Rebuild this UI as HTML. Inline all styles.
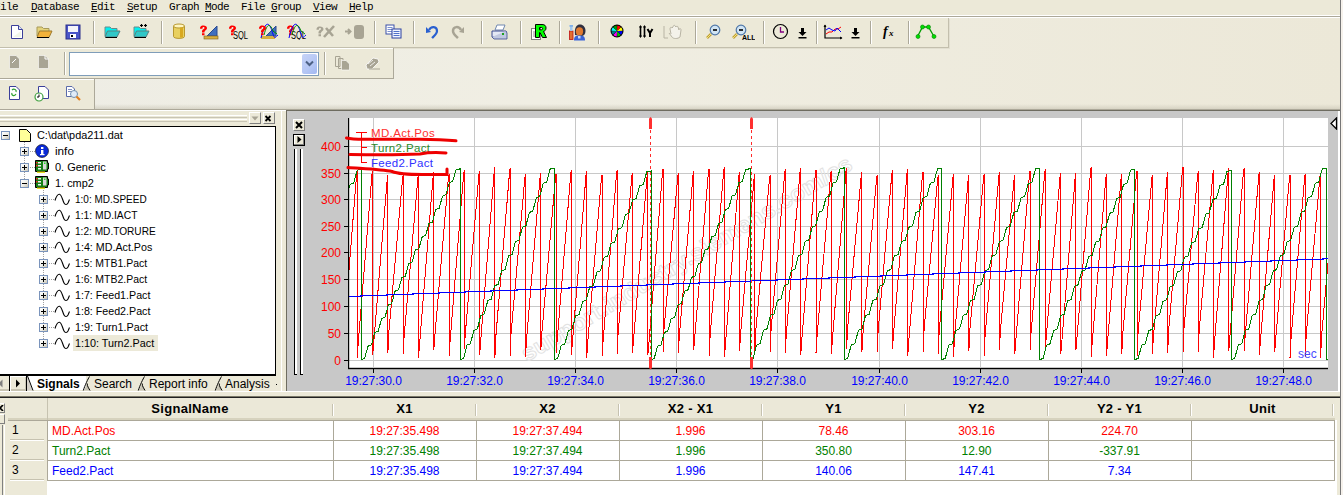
<!DOCTYPE html>
<html><head><meta charset="utf-8">
<style>
*{margin:0;padding:0;box-sizing:border-box}
html,body{width:1343px;height:495px;overflow:hidden;background:#ECE9D8;position:relative;font-family:"Liberation Sans",sans-serif}
.a{position:absolute}
.menu{font-family:"Liberation Mono",monospace;font-size:11px;letter-spacing:-0.6px;color:#000;top:0px;line-height:14px;white-space:pre}
.menu u{text-decoration:underline;text-underline-offset:1px;text-decoration-thickness:1px}
.sep{position:absolute;width:2px;height:22px;border-left:1px solid #ACA899;border-right:1px solid #fff}
.ico{position:absolute}
.tree{font-size:10.7px;color:#000;white-space:pre;line-height:12px}
.exp{position:absolute;width:9px;height:9px;border:1px solid #7A94BC;background:linear-gradient(135deg,#fff 0%,#f0f0ea 50%,#c8c4b4 100%)}
.exp:before{content:"";position:absolute;left:1px;top:3px;width:5px;height:1px;background:#000}
.exp.p:after{content:"";position:absolute;left:3px;top:1px;width:1px;height:5px;background:#000}
.dot{position:absolute;border-left:1px dotted #A0A0A0}
.doth{position:absolute;border-top:1px dotted #A0A0A0}
.hd{font-weight:bold;font-size:13px;letter-spacing:0.3px;text-align:center;position:absolute;top:401px;line-height:15px}
.cell{position:absolute;font-size:12px;line-height:14px;text-align:center}
</style></head><body>
<!-- menu bar -->
<div class="a" style="left:0;top:0;width:1343px;height:15px;background:#ECE9D8"></div>
<div class="a menu" style="left:-6px"><u>F</u>ile</div>
<div class="a menu" style="left:31px"><u>D</u>atabase</div>
<div class="a menu" style="left:91px"><u>E</u>dit</div>
<div class="a menu" style="left:127px"><u>S</u>etup</div>
<div class="a menu" style="left:169px">Graph <u>M</u>ode</div>
<div class="a menu" style="left:241px">File <u>G</u>roup</div>
<div class="a menu" style="left:313px"><u>V</u>iew</div>
<div class="a menu" style="left:349px"><u>H</u>elp</div>
<div class="a" style="left:0;top:15px;width:1343px;height:1px;background:#FFFFFF"></div>
<div class="a" style="left:0;top:16px;width:1343px;height:1px;background:#ACA899"></div>
<div class="a" style="left:0;top:17px;width:1343px;height:1px;background:#FFFFFF"></div>
<!-- dock gradient area -->
<div class="a" style="left:0;top:18px;width:1343px;height:92px;background:linear-gradient(90deg,#EEEDE5 0%,#F0EEE3 40%,#ECE8D8 100%)"></div>
<div class="a" style="left:0;top:104px;width:1343px;height:5px;background:linear-gradient(180deg,rgba(200,196,180,0) 0%,rgba(200,196,180,.6) 100%)"></div>
<div class="a" style="left:0;top:109px;width:1343px;height:1px;background:#ACA899"></div>
<!-- toolbars -->
<div class="a" style="left:0;top:18px;width:949px;height:30px;background:#ECE9D8;border-right:1px solid #C3BFAD;border-bottom:1px solid #C3BFAD;box-shadow:1px 1px 0 #E2DFD0"></div>
<div class="a" style="left:0;top:48px;width:394px;height:31px;background:#ECE9D8;border-right:1px solid #ACA899;border-bottom:1px solid #ACA899;box-shadow:inset 0 1px 0 #fff"></div>
<div class="a" style="left:0;top:79px;width:95px;height:31px;background:#ECE9D8;border-right:1px solid #ACA899;border-bottom:1px solid #ACA899;box-shadow:inset 0 1px 0 #fff"></div>
<svg class="ico" style="left:10px;top:24px" width="14" height="16" viewBox="0 0 14 16"><path d="M1.5,1.5 H8.5 L12.5,5.5 V14.5 H1.5 Z" fill="#fff" stroke="#3B3F9A" stroke-width="1"/><path d="M8.5,1.5 V5.5 H12.5" fill="#DCE6F5" stroke="#3B3F9A"/><path d="M3,13 L11,7 V13Z" fill="#E8F0D8" opacity=".6"/></svg>
<svg class="ico" style="left:36px;top:25px" width="17" height="14" viewBox="0 0 17 14"><path d="M1,2 H6 L7.5,3.5 H13 V11 H1Z" fill="#E4D37A" stroke="#A89A5A"/><path d="M3.5,6 H16 L13,12.5 H1Z" fill="#F2B23A" stroke="#9C7A30"/><path d="M1,12.5 H13" stroke="#000"/></svg>
<svg class="ico" style="left:65px;top:24px" width="16" height="16" viewBox="0 0 16 16"><rect x="1" y="1" width="14" height="14" fill="#4A55C8" stroke="#2A2F8A"/><rect x="3" y="2" width="10" height="6" fill="#F4F4FA"/><rect x="5" y="10" width="6" height="4" fill="#fff"/><rect x="6" y="11" width="2" height="2" fill="#000"/></svg>
<div class="sep" style="left:93px;top:21px;height:23px"></div>
<svg class="ico" style="left:104px;top:24px" width="17" height="15" viewBox="0 0 17 15"><path d="M1,3 H6 L7.5,4.5 H13 V12 H1Z" fill="#00F0F0" stroke="#6A8A8A"/><path d="M3.5,7 H16 L13,13 H1Z" fill="#30C8C8" stroke="#5A8080"/><path d="M1.5,13.5 H13" stroke="#000"/></svg>
<svg class="ico" style="left:133px;top:24px" width="17" height="15" viewBox="0 0 17 15"><path d="M1,3 H6 L7.5,4.5 H13 V12 H1Z" fill="#00F0F0" stroke="#6A8A8A"/><path d="M3.5,7 H16 L13,13 H1Z" fill="#30C8C8" stroke="#5A8080"/><path d="M1.5,13.5 H13" stroke="#000"/><path d="M7,1.5 h3 M8.5,0 v3 M11,1.5 h3 M12.5,0 v3" stroke="#000" stroke-width="1.2"/></svg>
<div class="sep" style="left:161px;top:21px;height:23px"></div>
<svg class="ico" style="left:172px;top:23px" width="14" height="17" viewBox="0 0 14 17"><path d="M1.5,3 V13.5 C1.5,16 12.5,16 12.5,13.5 V3" fill="#E8D060" stroke="#B89830"/><ellipse cx="7" cy="3" rx="5.5" ry="2" fill="#FFF6C0" stroke="#B89830"/><rect x="8" y="4.5" width="3" height="10" fill="#D8A820"/></svg>
<svg class="ico" style="left:199px;top:23px" width="20" height="17" viewBox="0 0 20 17"><path d="M8,13 L18,3 V13Z" fill="#3F6FC0" stroke="#2A4A90"/><rect x="5" y="13" width="14" height="3" fill="#D8B040" stroke="#806020" stroke-width=".6"/><path transform="translate(0,2.5) scale(1,0.82)" d="M1,4 C1,0.5 3,0 4.5,0 C6.5,0 8,1 8,3.5 C8,5.5 6,6 5.5,7.5 V8.5 H3 V7 C3,5 5.5,4.5 5.5,3.2 C5.5,2.2 5,1.8 4.5,1.8 C3.8,1.8 3.4,2.4 3.4,4Z M3,9.5 H5.5 V12 H3Z" fill="#FF0000"/></svg>
<svg class="ico" style="left:228px;top:23px" width="21" height="17" viewBox="0 0 21 17"><path transform="translate(0,2.5) scale(1,0.82)" d="M1,4 C1,0.5 3,0 4.5,0 C6.5,0 8,1 8,3.5 C8,5.5 6,6 5.5,7.5 V8.5 H3 V7 C3,5 5.5,4.5 5.5,3.2 C5.5,2.2 5,1.8 4.5,1.8 C3.8,1.8 3.4,2.4 3.4,4Z M3,9.5 H5.5 V12 H3Z" fill="#FF0000"/><text x="5" y="16" font-family="Liberation Sans" font-size="10" fill="#000" textLength="15" lengthAdjust="spacingAndGlyphs">SQL</text></svg>
<svg class="ico" style="left:258px;top:23px" width="21" height="17" viewBox="0 0 21 17"><path d="M8,13 L18,3 V13Z" fill="#3F6FC0" stroke="#2A4A90"/><rect x="3" y="13" width="14" height="3" fill="#D8B040"/><path d="M3,15 C7,-2 11,-2 14,8 S17,14 20,12" fill="none" stroke="#0000FF"/><path d="M6,12 C9,0 12,0 15,8 L19,11" fill="none" stroke="#008800"/><path transform="translate(0,2.5) scale(1,0.82)" d="M1,4 C1,0.5 3,0 4.5,0 C6.5,0 8,1 8,3.5 C8,5.5 6,6 5.5,7.5 V8.5 H3 V7 C3,5 5.5,4.5 5.5,3.2 C5.5,2.2 5,1.8 4.5,1.8 C3.8,1.8 3.4,2.4 3.4,4Z M3,9.5 H5.5 V12 H3Z" fill="#FF0000"/></svg>
<svg class="ico" style="left:286px;top:23px" width="21" height="17" viewBox="0 0 21 17"><path transform="translate(0,2.5) scale(1,0.82)" d="M1,4 C1,0.5 3,0 4.5,0 C6.5,0 8,1 8,3.5 C8,5.5 6,6 5.5,7.5 V8.5 H3 V7 C3,5 5.5,4.5 5.5,3.2 C5.5,2.2 5,1.8 4.5,1.8 C3.8,1.8 3.4,2.4 3.4,4Z M3,9.5 H5.5 V12 H3Z" fill="#FF0000"/><text x="5" y="16" font-family="Liberation Sans" font-size="10" fill="#000" textLength="15" lengthAdjust="spacingAndGlyphs">SQL</text><path d="M3,15 C7,-2 11,-2 14,8 S17,14 20,12" fill="none" stroke="#0000FF"/><path d="M6,12 C9,0 12,0 15,8 L19,11" fill="none" stroke="#008800"/></svg>
<svg class="ico" style="left:315px;top:24px" width="22" height="14" viewBox="0 0 22 14"><path transform="translate(0.5,2.5) scale(1,0.82)" d="M1,4 C1,0.5 3,0 4.5,0 C6.5,0 8,1 8,3.5 C8,5.5 6,6 5.5,7.5 V8.5 H3 V7 C3,5 5.5,4.5 5.5,3.2 C5.5,2.2 5,1.8 4.5,1.8 C3.8,1.8 3.4,2.4 3.4,4Z M3,9.5 H5.5 V12 H3Z" fill="#A8A494"/><path d="M9,13 L19,2 M11,4 L18,12" stroke="#A8A494" stroke-width="2.6"/></svg>
<svg class="ico" style="left:344px;top:24px" width="21" height="16" viewBox="0 0 21 16"><path d="M1,7.5 H6 M4,5 L6.5,7.5 L4,10" fill="none" stroke="#A8A494" stroke-width="2"/><rect x="10" y="1" width="10" height="14" rx="3" fill="#A8A494"/></svg>
<div class="sep" style="left:374px;top:21px;height:23px"></div>
<svg class="ico" style="left:385px;top:24px" width="17" height="15" viewBox="0 0 17 15"><rect x="1" y="1" width="8" height="9" fill="#fff" stroke="#3A50A8"/><path d="M2.5,3.5h5M2.5,5.5h5M2.5,7.5h5" stroke="#7A90D0"/><rect x="7" y="5" width="9" height="9" fill="#F0F4FF" stroke="#2A40A0"/><path d="M8.5,7.5h6M8.5,9.5h6M8.5,11.5h6" stroke="#5070C8"/></svg>
<div class="sep" style="left:413px;top:21px;height:23px"></div>
<svg class="ico" style="left:425px;top:24px" width="14" height="15" viewBox="0 0 14 15"><path d="M4,6 C6,2 12,2 12,7 C12,10 9,12 7,14" fill="none" stroke="#2A60D0" stroke-width="2.2"/><path d="M1,3 L1,9 L6,8Z" fill="#2A60D0"/></svg>
<svg class="ico" style="left:451px;top:24px" width="15" height="15" viewBox="0 0 15 15"><path d="M10,6 C8,2 2,2 2,7 C2,10 5,12 7,14" fill="none" stroke="#A8A494" stroke-width="2.5"/><path d="M13,3 L13,9 L8,8Z" fill="#A8A494"/></svg>
<div class="sep" style="left:481px;top:21px;height:23px"></div>
<svg class="ico" style="left:491px;top:24px" width="17" height="16" viewBox="0 0 17 16"><path d="M4,6 L6,1 H14 L12,6Z" fill="#fff" stroke="#7088B0"/><path d="M1,7 H15 V13 H1Z" fill="#E4E8F4" stroke="#3A4A90"/><path d="M1,13 L3,15 H16 V9 L15,7" fill="#C0C8E0" stroke="#3A4A90" stroke-width=".8"/><rect x="11" y="9" width="2" height="2" fill="#20A020"/></svg>
<div class="sep" style="left:520px;top:21px;height:23px"></div>
<svg class="ico" style="left:530px;top:23px" width="17" height="18" viewBox="0 0 17 18"><rect x="1.5" y="5.5" width="9" height="11" fill="#fff" stroke="#808080"/><path d="M3,9h5M3,11h5M3,13h5" stroke="#909090"/><path d="M5.5,1.5 H12 C15,1.5 16,3 16,5 C16,7 15,8 13.5,8.5 L16.5,14.5 H12.5 L10,9.5 H9.5 V14.5 H5.5Z M9.5,4.5 V6.8 H11.5 C12.3,6.8 12.6,6.2 12.6,5.6 C12.6,5 12.3,4.5 11.5,4.5Z" fill="#00FF00" stroke="#000" stroke-width="1"/></svg>
<div class="sep" style="left:559px;top:21px;height:23px"></div>
<svg class="ico" style="left:568px;top:23px" width="19" height="18" viewBox="0 0 19 18"><rect x="1.5" y="8" width="3.5" height="8.5" fill="#E07030" stroke="#C01010" stroke-width=".8"/><rect x="2" y="3" width="2.5" height="5" fill="#A0C8F0"/><rect x="1.5" y="2" width="3.5" height="1.8" fill="#80B0E8"/><path d="M7,12 C6,4 9,1.5 12,1.5 C15,1.5 17.5,4 17.5,8 C17.5,11 16,12.5 14,13Z" fill="#303040"/><ellipse cx="11.5" cy="8.5" rx="3.6" ry="4.2" fill="#E07A30"/><path d="M6,17.5 C6,13 8,12.5 11.5,12.5 C15,12.5 17,13 17,17.5Z" fill="#3A64D8"/><rect x="10" y="13" width="2.5" height="2.5" fill="#C8D8F0"/></svg>
<div class="sep" style="left:598px;top:21px;height:23px"></div>
<svg class="ico" style="left:610px;top:24px" width="14" height="14" viewBox="0 0 14 14"><circle cx="7" cy="7" r="6.5" fill="#000"/><path d="M7,7 L7.29,1.51 A5.5,5.5 0 0 1 10.68,2.91Z" fill="#FF0000"/><path d="M7,7 L11.09,3.32 A5.5,5.5 0 0 1 12.49,6.71Z" fill="#FFFF00"/><path d="M7,7 L12.49,7.29 A5.5,5.5 0 0 1 11.09,10.68Z" fill="#0000FF"/><path d="M7,7 L10.68,11.09 A5.5,5.5 0 0 1 7.29,12.49Z" fill="#00C000"/><path d="M7,7 L6.71,12.49 A5.5,5.5 0 0 1 3.32,11.09Z" fill="#FF00FF"/><path d="M7,7 L2.91,10.68 A5.5,5.5 0 0 1 1.51,7.29Z" fill="#008080"/><path d="M7,7 L1.51,6.71 A5.5,5.5 0 0 1 2.91,3.32Z" fill="#00FFFF"/><path d="M7,7 L3.32,2.91 A5.5,5.5 0 0 1 6.71,1.51Z" fill="#00A000"/></svg>
<svg class="ico" style="left:638px;top:24px" width="16" height="15" viewBox="0 0 16 15"><path d="M2.5,2 V13 M6.5,2 V13" stroke="#000" stroke-width="1.6"/><path d="M1,3.5 L2.5,1 L4,3.5Z M5,3.5 L6.5,1 L8,3.5Z M1,11.5 L2.5,14 L4,11.5Z M5,11.5 L6.5,14 L8,11.5Z" fill="#000"/><path d="M9.5,5 L12,9 L14.5,5 M12,9 V13" fill="none" stroke="#000" stroke-width="2"/></svg>
<svg class="ico" style="left:663px;top:24px" width="21" height="16" viewBox="0 0 21 16"><path d="M1,2 V14 H5" fill="none" stroke="#B8B4A4"/><path d="M6,9 L9,13 C10,15 15,15 17,13 L18,6 C18,4 16,4 16,6 L15,3 C15,2 13,2 13,3 L12,2 C12,1 10,1 10,3 L9,4 C8,3 7,3 7,5 L8,10" fill="#F4F2EA" stroke="#B8B4A4"/></svg>
<div class="sep" style="left:695px;top:21px;height:23px"></div>
<svg class="ico" style="left:705px;top:24px" width="16" height="16" viewBox="0 0 16 16"><path d="M2,14 L6,10" stroke="#C0A030" stroke-width="2.5"/><path d="M2,14 L6,10" stroke="#F0E080" stroke-width="1"/><circle cx="10" cy="6" r="4.8" fill="#D0E4F4" stroke="#5078A8" stroke-width="1.2"/><rect x="8" y="5.2" width="4" height="1.6" fill="#000"/></svg>
<svg class="ico" style="left:731px;top:24px" width="24" height="17" viewBox="0 0 24 17"><path d="M2,14 L6,10" stroke="#C0A030" stroke-width="2.5"/><path d="M2,14 L6,10" stroke="#F0E080" stroke-width="1"/><circle cx="10" cy="6" r="4.8" fill="#D0E4F4" stroke="#5078A8" stroke-width="1.2"/><rect x="8" y="5.2" width="4" height="1.6" fill="#000"/><text x="11" y="16" font-family="Liberation Sans" font-weight="bold" font-size="7" fill="#000">ALL</text></svg>
<div class="sep" style="left:763px;top:21px;height:23px"></div>
<svg class="ico" style="left:772px;top:23px" width="17" height="17" viewBox="0 0 17 17"><circle cx="8.5" cy="8.5" r="7" fill="none" stroke="#000" stroke-width="1.2"/><path d="M8.5,4 V9 H12" fill="none" stroke="#800080" stroke-width="1.3"/></svg>
<svg class="ico" style="left:798px;top:27px" width="9" height="12" viewBox="0 0 9 12"><path d="M3,1 H6 V5 H8.5 L4.5,9 L0.5,5 H3Z" fill="#000"/><rect x="0.5" y="10" width="8" height="1.5" fill="#000"/></svg>
<div class="sep" style="left:816px;top:21px;height:23px"></div>
<svg class="ico" style="left:823px;top:24px" width="20" height="17" viewBox="0 0 20 17"><path d="M2,1 V14 H19" fill="none" stroke="#000" stroke-width="1.2"/><path d="M0.5,3 L2,0.5 L3.5,3Z M17,12.5 L19.5,14 L17,15.5Z" fill="#000"/><path d="M3,10 L6,8 L9,8 L12,5 L15,5 L18,3" fill="none" stroke="#FF0000"/><path d="M3,6 L6,4 L9,6 L12,7 L14,4 L18,8" fill="none" stroke="#0000FF"/></svg>
<svg class="ico" style="left:851px;top:27px" width="9" height="12" viewBox="0 0 9 12"><path d="M3,1 H6 V5 H8.5 L4.5,9 L0.5,5 H3Z" fill="#000"/><rect x="0.5" y="10" width="8" height="1.5" fill="#000"/></svg>
<div class="sep" style="left:870px;top:21px;height:23px"></div>
<svg class="ico" style="left:882px;top:24px" width="16" height="16" viewBox="0 0 16 16"><text x="1" y="12" font-family="Liberation Serif" font-style="italic" font-weight="bold" font-size="14" fill="#000">f</text><text x="7" y="12" font-family="Liberation Serif" font-style="italic" font-weight="bold" font-size="9" fill="#000">x</text></svg>
<div class="sep" style="left:908px;top:21px;height:23px"></div>
<svg class="ico" style="left:915px;top:24px" width="24" height="16" viewBox="0 0 24 16"><path d="M2.5,12.5 L7.5,3 L13.5,3 L19,12.5" fill="none" stroke="#00A000" stroke-width="1.3"/><g fill="#00E000" stroke="#008000" stroke-width=".6"><circle cx="3" cy="12.5" r="2"/><circle cx="7.5" cy="3" r="2"/><circle cx="13.5" cy="3" r="2"/><circle cx="19" cy="12.5" r="2"/></g></svg>
<svg class="ico" style="left:8px;top:54px" width="13" height="16" viewBox="0 0 13 16"><path d="M1.5,1.5 H8 L11.5,5 V14.5 H1.5Z" fill="#A8A494" stroke="#fff" stroke-width=".6"/><path d="M4,9 L8,5" stroke="#fff"/></svg>
<svg class="ico" style="left:37px;top:54px" width="13" height="16" viewBox="0 0 13 16"><path d="M1.5,1.5 H8 L11.5,5 V14.5 H1.5Z" fill="#A8A494" stroke="#fff" stroke-width=".6"/><path d="M8,1.5 V5 H11.5" fill="none" stroke="#fff"/></svg>
<div class="sep" style="left:64px;top:52px;height:23px"></div>
<div class="a" style="left:69px;top:52px;width:250px;height:24px;background:#fff;border:1px solid #7F9DB9"></div>
<div class="a" style="left:302px;top:54px;width:15px;height:20px;border-radius:2px;background:linear-gradient(135deg,#C6D3F7 0%,#B4C6F4 60%,#A2B8F2 100%)"></div>
<svg class="ico" style="left:305px;top:60px" width="9" height="7" viewBox="0 0 9 7"><path d="M1,1.5 L4.5,5 L8,1.5" fill="none" stroke="#4D6185" stroke-width="2"/></svg>
<div class="sep" style="left:324px;top:52px;height:23px"></div>
<svg class="ico" style="left:334px;top:55px" width="18" height="16" viewBox="0 0 18 16"><path d="M1.5,1.5 H6 V11.5 H1.5Z M4.5,3.5 H9 V13.5 H4.5Z" fill="#ECE9D8" stroke="#A8A494"/><path d="M7.5,5.5 H12 L15.5,9 V15 H7.5Z" fill="#A8A494" stroke="#fff" stroke-width=".6"/></svg>
<svg class="ico" style="left:364px;top:56px" width="18" height="14" viewBox="0 0 18 14"><path d="M2,9 L9,2 L14,3 L15,6 L8,13 L3,13Z" fill="#A8A494" stroke="#fff" stroke-width=".8"/><path d="M5,13 H16" stroke="#A8A494"/><path d="M4,8 L9,4 M6,10 L11,6" stroke="#fff" stroke-width=".8"/></svg>
<svg class="ico" style="left:8px;top:85px" width="13" height="16" viewBox="0 0 13 16"><path d="M1.5,1.5 H8 L11.5,5 V14.5 H1.5Z" fill="#fff" stroke="#3B3F9A"/><path d="M4,5 C6,3 9,5 8,7 M8,9 C6,12 3,10 4,8" fill="none" stroke="#30A030" stroke-width="1.2"/></svg>
<svg class="ico" style="left:34px;top:85px" width="17" height="17" viewBox="0 0 17 17"><path d="M4.5,1.5 H11 L14.5,5 V13.5 H4.5Z" fill="#fff" stroke="#3B3F9A"/><circle cx="5" cy="12" r="4" fill="#fff" stroke="#40A040" stroke-width="1.2"/><path d="M5,9.5 V12 H3" fill="none" stroke="#000"/></svg>
<svg class="ico" style="left:65px;top:85px" width="17" height="17" viewBox="0 0 17 17"><path d="M1.5,1.5 H7 L9.5,4 V11.5 H1.5Z" fill="#fff" stroke="#5A6AAA"/><path d="M3,4.5h4M3,6.5h4" stroke="#8090C0"/><circle cx="9" cy="9" r="3.5" fill="#E0ECF8" stroke="#7090B0"/><path d="M11.5,11.5 L15,15" stroke="#E08020" stroke-width="2.2"/></svg>
<!-- left panel -->
<div class="a" style="left:0;top:110px;width:1343px;height:1px;background:#FFFFFF"></div>
<div class="a" style="left:0;top:111px;width:286px;height:281px;background:#ECE9D8"></div>
<div class="a" style="left:0;top:115px;width:247px;height:3px;border-top:1px solid #fff;border-bottom:1px solid #C8C4B4"></div>
<div class="a" style="left:0;top:119px;width:247px;height:3px;border-top:1px solid #fff;border-bottom:1px solid #C8C4B4"></div>
<div class="a" style="left:249px;top:112px;width:12px;height:12px;background:#ECE9D8;border:1px solid;border-color:#fff #808080 #808080 #fff"></div>
<svg class="ico" style="left:251px;top:116px" width="8" height="5" viewBox="0 0 8 5"><path d="M0.5,0.5 H7.5 L4,4.5Z" fill="#A8A494"/></svg>
<div class="a" style="left:263px;top:112px;width:12px;height:12px;background:#ECE9D8;border:1px solid;border-color:#fff #808080 #808080 #fff"></div>
<svg class="ico" style="left:264px;top:115px" width="8" height="7" viewBox="0 0 8 7"><path d="M1.5,1 L6.5,6 M6.5,1 L1.5,6" stroke="#000" stroke-width="1.8"/></svg>
<div class="a" style="left:0;top:126px;width:276px;height:250px;background:#fff;border-top:1px solid #000;border-right:1px solid #000;border-bottom:1px solid #000"></div>
<div class="exp" style="left:1px;top:131px"></div>
<svg class="ico" style="left:19px;top:129px" width="12" height="13" viewBox="0 0 12 13"><path d="M0.5,0.5 H7.5 L11.5,4.5 V12.5 H0.5Z" fill="#FFFF99" stroke="#000"/></svg>
<div class="a tree" style="left:37px;top:129px;transform:scaleX(1.0192);transform-origin:0 0">C:\dat\pda211.dat</div>
<div class="dot" style="left:24px;top:142px;height:41px"></div>
<div class="exp p" style="left:20px;top:147px"></div>
<div class="doth" style="left:30px;top:151px;width:5px"></div>
<svg class="ico" style="left:35px;top:144px" width="14" height="14" viewBox="0 0 14 14"><circle cx="7" cy="7" r="6.5" fill="#0A2AD8" stroke="#000" stroke-width=".6"/><rect x="6" y="6" width="2.4" height="5" fill="#fff"/><rect x="6" y="3" width="2.4" height="2" fill="#fff"/><rect x="5" y="10" width="4.5" height="1.2" fill="#fff"/></svg>
<div class="a tree" style="left:55px;top:145px;transform:scaleX(1.0966);transform-origin:0 0">info</div>
<div class="exp p" style="left:20px;top:163px"></div>
<div class="doth" style="left:30px;top:167px;width:5px"></div>
<svg class="ico" style="left:35px;top:160px" width="14" height="14" viewBox="0 0 14 14"><path d="M0.5,0.5 H12.5 V3 H13.5 V9 H12.5 V11.5 H0.5Z" fill="#158015" stroke="#000" stroke-width="1"/><rect x="1" y="2" width="1.5" height="1.5" fill="#FF2020"/><rect x="1" y="5" width="1.5" height="1.5" fill="#FF2020"/><rect x="3" y="2" width="3" height="1.5" fill="#F0F0F0"/><rect x="3" y="5" width="3" height="1.5" fill="#F0F0F0"/><rect x="3" y="8" width="3" height="1.5" fill="#F0F0F0"/><rect x="8" y="1.5" width="3.5" height="8" fill="#D8D8D8"/><rect x="9" y="2.5" width="1.5" height="1.5" fill="#20E020"/><rect x="2" y="11.5" width="8" height="1.5" fill="#E8E020"/></svg>
<div class="a tree" style="left:55px;top:161px;transform:scaleX(1.0281);transform-origin:0 0">0. Generic</div>
<div class="exp" style="left:20px;top:179px"></div>
<div class="doth" style="left:30px;top:183px;width:5px"></div>
<svg class="ico" style="left:35px;top:176px" width="14" height="14" viewBox="0 0 14 14"><path d="M0.5,0.5 H12.5 V3 H13.5 V9 H12.5 V11.5 H0.5Z" fill="#158015" stroke="#000" stroke-width="1"/><rect x="1" y="2" width="1.5" height="1.5" fill="#FF2020"/><rect x="1" y="5" width="1.5" height="1.5" fill="#FF2020"/><rect x="3" y="2" width="3" height="1.5" fill="#F0F0F0"/><rect x="3" y="5" width="3" height="1.5" fill="#F0F0F0"/><rect x="3" y="8" width="3" height="1.5" fill="#F0F0F0"/><rect x="8" y="1.5" width="3.5" height="8" fill="#D8D8D8"/><rect x="9" y="2.5" width="1.5" height="1.5" fill="#20E020"/><rect x="2" y="11.5" width="8" height="1.5" fill="#E8E020"/></svg>
<div class="a tree" style="left:55px;top:177px;transform:scaleX(1.0228);transform-origin:0 0">1. cmp2</div>
<div class="dot" style="left:43px;top:190px;height:153px"></div>
<div class="exp p" style="left:39px;top:195px"></div>
<div class="doth" style="left:49px;top:199px;width:5px"></div>
<svg class="ico" style="left:54px;top:193px" width="17" height="13" viewBox="0 0 17 13"><path d="M1,7.5 C2.5,2.5 4,1 5.5,1.2 C7.5,1.5 8.5,7 10,10 C11,12 13,12 14,10 L15.5,6.5" fill="none" stroke="#000" stroke-width="1.1"/></svg>
<div class="a tree" style="left:75px;top:193px;transform:scaleX(0.9344);transform-origin:0 0">1:0: MD.SPEED</div>
<div class="exp p" style="left:39px;top:211px"></div>
<div class="doth" style="left:49px;top:215px;width:5px"></div>
<svg class="ico" style="left:54px;top:209px" width="17" height="13" viewBox="0 0 17 13"><path d="M1,7.5 C2.5,2.5 4,1 5.5,1.2 C7.5,1.5 8.5,7 10,10 C11,12 13,12 14,10 L15.5,6.5" fill="none" stroke="#000" stroke-width="1.1"/></svg>
<div class="a tree" style="left:75px;top:209px;transform:scaleX(0.9655);transform-origin:0 0">1:1: MD.IACT</div>
<div class="exp p" style="left:39px;top:227px"></div>
<div class="doth" style="left:49px;top:231px;width:5px"></div>
<svg class="ico" style="left:54px;top:225px" width="17" height="13" viewBox="0 0 17 13"><path d="M1,7.5 C2.5,2.5 4,1 5.5,1.2 C7.5,1.5 8.5,7 10,10 C11,12 13,12 14,10 L15.5,6.5" fill="none" stroke="#000" stroke-width="1.1"/></svg>
<div class="a tree" style="left:75px;top:225px;transform:scaleX(0.9458);transform-origin:0 0">1:2: MD.TORURE</div>
<div class="exp p" style="left:39px;top:243px"></div>
<div class="doth" style="left:49px;top:247px;width:5px"></div>
<svg class="ico" style="left:54px;top:241px" width="17" height="13" viewBox="0 0 17 13"><path d="M1,7.5 C2.5,2.5 4,1 5.5,1.2 C7.5,1.5 8.5,7 10,10 C11,12 13,12 14,10 L15.5,6.5" fill="none" stroke="#000" stroke-width="1.1"/></svg>
<div class="a tree" style="left:75px;top:241px;transform:scaleX(1.0011);transform-origin:0 0">1:4: MD.Act.Pos</div>
<div class="exp p" style="left:39px;top:259px"></div>
<div class="doth" style="left:49px;top:263px;width:5px"></div>
<svg class="ico" style="left:54px;top:257px" width="17" height="13" viewBox="0 0 17 13"><path d="M1,7.5 C2.5,2.5 4,1 5.5,1.2 C7.5,1.5 8.5,7 10,10 C11,12 13,12 14,10 L15.5,6.5" fill="none" stroke="#000" stroke-width="1.1"/></svg>
<div class="a tree" style="left:75px;top:257px;transform:scaleX(0.9789);transform-origin:0 0">1:5: MTB1.Pact</div>
<div class="exp p" style="left:39px;top:275px"></div>
<div class="doth" style="left:49px;top:279px;width:5px"></div>
<svg class="ico" style="left:54px;top:273px" width="17" height="13" viewBox="0 0 17 13"><path d="M1,7.5 C2.5,2.5 4,1 5.5,1.2 C7.5,1.5 8.5,7 10,10 C11,12 13,12 14,10 L15.5,6.5" fill="none" stroke="#000" stroke-width="1.1"/></svg>
<div class="a tree" style="left:75px;top:273px;transform:scaleX(0.9789);transform-origin:0 0">1:6: MTB2.Pact</div>
<div class="exp p" style="left:39px;top:291px"></div>
<div class="doth" style="left:49px;top:295px;width:5px"></div>
<svg class="ico" style="left:54px;top:289px" width="17" height="13" viewBox="0 0 17 13"><path d="M1,7.5 C2.5,2.5 4,1 5.5,1.2 C7.5,1.5 8.5,7 10,10 C11,12 13,12 14,10 L15.5,6.5" fill="none" stroke="#000" stroke-width="1.1"/></svg>
<div class="a tree" style="left:75px;top:289px;transform:scaleX(0.9991);transform-origin:0 0">1:7: Feed1.Pact</div>
<div class="exp p" style="left:39px;top:307px"></div>
<div class="doth" style="left:49px;top:311px;width:5px"></div>
<svg class="ico" style="left:54px;top:305px" width="17" height="13" viewBox="0 0 17 13"><path d="M1,7.5 C2.5,2.5 4,1 5.5,1.2 C7.5,1.5 8.5,7 10,10 C11,12 13,12 14,10 L15.5,6.5" fill="none" stroke="#000" stroke-width="1.1"/></svg>
<div class="a tree" style="left:75px;top:305px;transform:scaleX(0.9991);transform-origin:0 0">1:8: Feed2.Pact</div>
<div class="exp p" style="left:39px;top:323px"></div>
<div class="doth" style="left:49px;top:327px;width:5px"></div>
<svg class="ico" style="left:54px;top:321px" width="17" height="13" viewBox="0 0 17 13"><path d="M1,7.5 C2.5,2.5 4,1 5.5,1.2 C7.5,1.5 8.5,7 10,10 C11,12 13,12 14,10 L15.5,6.5" fill="none" stroke="#000" stroke-width="1.1"/></svg>
<div class="a tree" style="left:75px;top:321px;transform:scaleX(1.0085);transform-origin:0 0">1:9: Turn1.Pact</div>
<div class="a" style="left:73px;top:335px;width:85px;height:16px;background:#ECE9D8"></div>
<div class="exp p" style="left:39px;top:339px"></div>
<div class="doth" style="left:49px;top:343px;width:5px"></div>
<svg class="ico" style="left:54px;top:337px" width="17" height="13" viewBox="0 0 17 13"><path d="M1,7.5 C2.5,2.5 4,1 5.5,1.2 C7.5,1.5 8.5,7 10,10 C11,12 13,12 14,10 L15.5,6.5" fill="none" stroke="#000" stroke-width="1.1"/></svg>
<div class="a tree" style="left:75px;top:337px;transform:scaleX(1.0097);transform-origin:0 0">1:10: Turn2.Pact</div>
<div class="a" style="left:0;top:376px;width:280px;height:15px;background:#ECE9D8"></div>
<div class="a" style="left:0;top:374px;width:276px;height:2px;background:#000"></div>
<div class="a" style="left:0;top:376px;width:9px;height:15px;background:#ECE9D8;border-bottom:2px solid #C8C4B2"></div>
<svg class="ico" style="left:0px;top:379px" width="4" height="9" viewBox="0 0 4 9"><path d="M2.5,0.5 V8.5 L-1.5,4.5Z" fill="#808080"/></svg>
<div class="a" style="left:9px;top:376px;width:1px;height:15px;background:#000"></div>
<div class="a" style="left:10px;top:376px;width:16px;height:15px;background:#ECE9D8;box-shadow:inset 1px 1px 0 #fff, inset -1px -2px 0 #C8C4B2"></div>
<svg class="ico" style="left:15px;top:379px" width="6" height="9" viewBox="0 0 6 9"><path d="M1,0.5 V8.5 L5,4.5Z" fill="#000"/></svg>
<div class="a" style="left:26px;top:376px;width:1px;height:15px;background:#000"></div>
<div class="a" style="left:28px;top:376px;width:58px;height:14px;background:#fff"></div>
<svg class="ico" style="left:27px;top:376px" width="253" height="15" viewBox="0 0 253 15"><path d="M0,0.5 L5.5,14.5 H0Z" fill="#D4D0C8"/><path d="M0.5,0 L6,14.5" stroke="#000" fill="none"/><path d="M57,14.5 L60,8 L62.5,14.5Z" fill="#C8C4B4"/><path d="M62.5,0.5 C61,3 58,9 56.3,14.5" stroke="#000" fill="none"/><path d="M60.2,7.5 C60,10 62,12.5 63,14.5" stroke="#000" fill="none"/><path d="M112,14.5 L115,8 L117.5,14.5Z" fill="#C8C4B4"/><path d="M117.5,0.5 C116,3 113,9 111.3,14.5" stroke="#000" fill="none"/><path d="M115.2,7.5 C115,10 117,12.5 118,14.5" stroke="#000" fill="none"/><path d="M189,14.5 L192,8 L194.5,14.5Z" fill="#C8C4B4"/><path d="M194.5,0.5 C193,3 190,9 188.3,14.5" stroke="#000" fill="none"/><path d="M192.2,7.5 C192,10 194,12.5 195,14.5" stroke="#000" fill="none"/></svg>
<div class="a" style="left:37px;top:377px;font-size:12px;font-weight:bold;line-height:14px">Signals</div>
<div class="a" style="left:94px;top:377px;font-size:12px;line-height:14px">Search</div>
<div class="a" style="left:149px;top:377px;font-size:12px;line-height:14px">Report info</div>
<div class="a" style="left:225px;top:377px;font-size:12px;line-height:14px">Analysis</div>
<div class="a" style="left:276px;top:384px;width:1px;height:1px;background:#000"></div>
<div class="a" style="left:0;top:391px;width:286px;height:1px;background:#fff"></div>
<!-- chart panel -->
<div class="a" style="left:286px;top:110px;width:1057px;height:1px;background:#6E6C60"></div>
<div class="a" style="left:286px;top:110px;width:1px;height:281px;background:#6E6C60"></div>
<div class="a" style="left:281px;top:111px;width:1px;height:280px;background:#FFFFFF"></div>
<div class="a" style="left:287px;top:111px;width:1051px;height:280px;background:#C8C8C8"></div>
<div class="a" style="left:1338px;top:111px;width:2px;height:280px;background:#fff"></div>
<div class="a" style="left:293px;top:119px;width:12px;height:12px;background:#ECE9D8;border:1px solid;border-color:#fff #808080 #808080 #fff"></div>
<svg class="ico" style="left:295px;top:121px" width="8" height="8" viewBox="0 0 8 8"><path d="M1,1 L7,7 M7,1 L1,7" stroke="#000" stroke-width="2"/></svg>
<div class="a" style="left:293px;top:134px;width:12px;height:12px;background:#ECE9D8;border:1px solid #000;box-shadow:inset -1px -1px 0 #808080, inset 1px 1px 0 #fff"></div>
<svg class="ico" style="left:297px;top:136px" width="5" height="7" viewBox="0 0 5 7"><path d="M0.5,0 L4.5,3.5 L0.5,7Z" fill="#000"/></svg>
<div class="a" style="left:294px;top:149px;width:3px;height:226px;border-left:1px solid #000;background:#fff;border-bottom:1px solid #000"></div>
<div class="a" style="left:300px;top:149px;width:3px;height:226px;border-left:1px solid #000;background:#fff;border-bottom:1px solid #000"></div>
<svg class="ico" style="left:1330px;top:117px" width="8" height="13" viewBox="0 0 8 13"><path d="M6.5,1 L1,6.5 L6.5,12Z" fill="#fff" stroke="#000" stroke-width="1.3"/></svg>
<svg width="1343" height="495" style="position:absolute;left:0;top:0">
<defs><clipPath id="pc"><rect x="349" y="118" width="979" height="249"/></clipPath></defs>
<rect x="349" y="118" width="979" height="249" fill="#fff"/>
<g stroke="#c8c8c8" stroke-width="1" shape-rendering="crispEdges"><line x1="349" y1="360.5" x2="1328" y2="360.5"/><line x1="349" y1="333.5" x2="1328" y2="333.5"/><line x1="349" y1="306.5" x2="1328" y2="306.5"/><line x1="349" y1="279.5" x2="1328" y2="279.5"/><line x1="349" y1="252.5" x2="1328" y2="252.5"/><line x1="349" y1="226.5" x2="1328" y2="226.5"/><line x1="349" y1="199.5" x2="1328" y2="199.5"/><line x1="349" y1="173.5" x2="1328" y2="173.5"/><line x1="349" y1="146.5" x2="1328" y2="146.5"/><line x1="373.5" y1="118" x2="373.5" y2="367"/><line x1="474.5" y1="118" x2="474.5" y2="367"/><line x1="575.5" y1="118" x2="575.5" y2="367"/><line x1="676.5" y1="118" x2="676.5" y2="367"/><line x1="777.5" y1="118" x2="777.5" y2="367"/><line x1="879.5" y1="118" x2="879.5" y2="367"/><line x1="980.5" y1="118" x2="980.5" y2="367"/><line x1="1081.5" y1="118" x2="1081.5" y2="367"/><line x1="1182.5" y1="118" x2="1182.5" y2="367"/><line x1="1283.5" y1="118" x2="1283.5" y2="367"/></g>
<g clip-path="url(#pc)"><text x="0" y="0" transform="translate(527,362) rotate(-30.6)" font-family="Liberation Sans" font-weight="bold" font-size="23" fill="none" stroke="#E2E2E2" stroke-width="1" textLength="380" lengthAdjust="spacingAndGlyphs">support.industry.siemens.com/cs</text></g>
<g clip-path="url(#pc)" fill="none">
<polyline points="342.0,172.9 342.0,356.9 342.8,347.4 356.7,173.3 357.3,170.0 357.3,170.0 357.3,357.6 358.1,344.6 372.0,174.2 372.6,171.0 372.6,171.0 372.6,354.8 373.4,346.3 387.3,178.2 387.9,175.1 387.9,175.1 387.9,353.4 388.7,333.5 402.6,178.4 403.2,175.3 403.2,175.3 403.2,354.1 404.0,337.7 417.9,178.1 418.5,175.0 418.5,175.0 418.5,357.5 419.3,347.4 433.2,175.2 433.8,172.0 433.8,172.0 433.8,350.3 434.6,338.8 448.4,177.7 449.1,174.5 449.1,174.5 449.1,356.2 449.9,343.4 463.7,173.5 464.3,170.2 464.3,170.2 464.3,349.1 465.1,336.1 479.0,173.9 479.6,170.7 479.6,170.7 479.6,354.5 480.4,344.7 494.3,170.5 494.9,167.2 494.9,167.2 494.9,357.9 495.7,338.3 509.6,171.5 510.2,168.2 510.2,168.2 510.2,355.5 511.0,334.0 524.9,177.5 525.5,174.4 525.5,174.4 525.5,357.2 526.3,342.8 540.2,176.1 540.8,173.0 540.8,173.0 540.8,350.4 541.6,335.8 555.5,177.2 556.1,174.1 556.1,174.1 556.1,352.7 556.9,343.4 570.8,173.4 571.4,170.1 571.4,170.1 571.4,354.7 572.2,345.2 586.1,174.1 586.7,170.9 586.7,170.9 586.7,357.7 587.5,345.0 601.4,178.2 602.0,175.1 602.0,175.1 602.0,356.3 602.8,344.7 616.6,173.0 617.2,169.8 617.2,169.8 617.2,354.2 618.0,334.9 631.9,176.1 632.5,172.9 632.5,172.9 632.5,352.6 633.3,342.4 647.2,174.9 647.8,171.7 647.8,171.7 647.8,355.4 648.6,347.0 662.5,172.0 663.1,168.8 663.1,168.8 663.1,351.5 663.9,330.6 677.8,176.7 678.4,173.5 678.4,173.5 678.4,352.8 679.2,337.5 693.1,174.3 693.7,171.1 693.7,171.1 693.7,349.8 694.5,339.8 708.4,172.6 709.0,169.4 709.0,169.4 709.0,355.5 709.8,340.1 723.7,170.4 724.3,167.2 724.3,167.2 724.3,357.2 725.1,348.7 739.0,175.2 739.6,172.0 739.6,172.0 739.6,351.0 740.4,335.8 754.2,177.4 754.9,174.3 754.9,174.3 754.9,353.6 755.6,332.3 769.5,178.4 770.1,175.3 770.1,175.3 770.1,351.8 770.9,332.1 784.8,172.3 785.4,169.1 785.4,169.1 785.4,352.8 786.2,335.3 800.1,171.3 800.7,168.1 800.7,168.1 800.7,355.3 801.5,343.7 815.4,172.9 816.0,169.7 816.0,169.7 816.0,352.6 816.8,339.5 830.7,173.9 831.3,170.6 831.3,170.6 831.3,353.9 832.1,343.6 846.0,171.6 846.6,168.4 846.6,168.4 846.6,349.2 847.4,330.6 861.3,174.8 861.9,171.6 861.9,171.6 861.9,351.9 862.7,336.6 876.6,178.2 877.2,175.1 877.2,175.1 877.2,351.5 878.0,332.9 891.9,173.3 892.5,170.1 892.5,170.1 892.5,348.7 893.3,336.1 907.1,171.8 907.8,168.6 907.8,168.6 907.8,355.6 908.5,344.5 922.4,175.5 923.0,172.3 923.0,172.3 923.0,351.8 923.8,332.8 937.7,178.5 938.3,175.4 938.3,175.4 938.3,353.9 939.1,332.5 953.0,177.3 953.6,174.2 953.6,174.2 953.6,357.2 954.4,337.6 968.3,178.2 968.9,175.1 968.9,175.1 968.9,350.9 969.7,331.9 983.6,177.6 984.2,174.5 984.2,174.5 984.2,355.9 985.0,336.8 998.9,175.4 999.5,172.3 999.5,172.3 999.5,349.9 1000.3,331.8 1014.2,178.0 1014.8,174.9 1014.8,174.9 1014.8,354.0 1015.6,342.8 1029.5,174.1 1030.1,170.9 1030.1,170.9 1030.1,349.8 1030.9,334.7 1044.8,171.8 1045.4,168.6 1045.4,168.6 1045.4,349.9 1046.2,337.0 1060.1,176.4 1060.7,173.3 1060.7,173.3 1060.7,354.3 1061.5,345.8 1075.3,175.7 1075.9,172.6 1075.9,172.6 1075.9,349.7 1076.7,341.3 1090.6,170.6 1091.2,167.4 1091.2,167.4 1091.2,356.9 1092.0,345.0 1105.9,177.2 1106.5,174.1 1106.5,174.1 1106.5,356.1 1107.3,344.5 1121.2,176.8 1121.8,173.6 1121.8,173.6 1121.8,353.6 1122.6,336.2 1136.5,173.8 1137.1,170.6 1137.1,170.6 1137.1,355.8 1137.9,334.8 1151.8,178.7 1152.4,175.5 1152.4,175.5 1152.4,354.3 1153.2,340.1 1167.1,175.6 1167.7,172.5 1167.7,172.5 1167.7,352.8 1168.5,332.1 1182.4,170.7 1183.0,167.4 1183.0,167.4 1183.0,351.6 1183.8,330.2 1197.7,174.4 1198.3,171.2 1198.3,171.2 1198.3,352.3 1199.1,331.3 1213.0,173.1 1213.5,169.8 1213.5,169.8 1213.5,357.8 1214.3,344.8 1228.2,171.1 1228.8,167.9 1228.8,167.9 1228.8,350.8 1229.6,339.7 1243.5,171.3 1244.1,168.1 1244.1,168.1 1244.1,350.6 1244.9,339.4 1258.8,175.4 1259.4,172.3 1259.4,172.3 1259.4,354.5 1260.2,343.7 1274.1,177.8 1274.7,174.7 1274.7,174.7 1274.7,352.2 1275.5,341.3 1289.4,178.2 1290.0,175.1 1290.0,175.1 1290.0,357.7 1290.8,341.2 1304.7,177.0 1305.3,173.8 1305.3,173.8 1305.3,356.8 1306.1,336.5 1320.0,175.9 1320.6,172.7 1320.6,172.7 1320.6,357.8 1321.4,338.4 1335.3,178.7 1335.9,175.6" stroke="#ff0000" stroke-width="1" shape-rendering="crispEdges"/>
<polyline points="265.1,183.9 265.1,359.4 268.3,358.6 271.9,345.2 275.4,343.8 279.0,330.4 282.5,329.1 286.1,315.7 289.6,314.3 293.2,300.9 296.8,299.6 300.3,286.2 303.9,284.8 307.4,271.4 311.0,270.0 314.6,256.6 318.1,255.3 321.7,242.3 325.2,241.0 328.8,228.1 332.3,226.8 335.9,213.4 339.5,212.0 343.0,198.6 346.6,197.3 350.1,184.4 353.7,183.1 357.2,170.1 361.6,169.5 361.6,169.5 361.6,359.4 364.6,358.6 368.0,346.2 371.4,344.9 374.8,332.5 378.2,331.1 381.6,318.7 385.0,317.3 388.3,304.9 391.7,303.6 395.1,291.2 398.5,289.8 401.9,277.4 405.3,276.1 408.7,263.7 412.0,262.3 415.4,250.0 418.8,248.7 422.2,236.8 425.6,235.5 429.0,223.4 432.4,222.1 435.7,209.7 439.1,208.3 442.5,196.1 445.9,194.8 449.3,182.8 452.7,181.5 456.1,169.4 460.4,168.9 460.4,168.9 460.4,359.4 463.5,358.6 467.0,345.1 470.4,343.8 473.9,330.3 477.4,328.9 480.8,315.4 484.3,314.0 487.8,300.5 491.2,299.2 494.7,285.7 498.2,284.3 501.6,270.8 505.1,269.5 508.6,256.0 512.0,254.6 515.5,241.5 519.0,240.2 522.4,227.2 525.9,225.9 529.4,212.4 532.8,211.1 536.3,197.6 539.8,196.3 543.2,183.3 546.7,182.0 550.2,168.9 554.5,168.3 554.5,168.3 554.5,359.4 557.7,358.6 561.3,345.3 564.8,344.0 568.4,330.7 572.0,329.3 575.5,316.0 579.1,314.7 582.7,301.4 586.2,300.0 589.8,286.7 593.4,285.4 596.9,272.1 600.5,270.7 604.1,257.4 607.6,256.1 611.2,243.2 614.8,241.9 618.3,229.0 621.9,227.7 625.5,214.5 629.0,213.1 632.6,199.9 636.1,198.5 639.7,185.7 643.3,184.4 646.8,171.6 651.2,171.0 651.2,171.0 651.2,359.4 654.2,358.6 657.6,346.2 661.0,344.9 664.4,332.4 667.8,331.1 671.2,318.7 674.6,317.3 677.9,304.9 681.3,303.6 684.7,291.2 688.1,289.8 691.5,277.4 694.9,276.1 698.3,263.7 701.6,262.3 705.0,250.0 708.4,248.7 711.8,236.8 715.2,235.5 718.6,223.4 722.0,222.1 725.3,209.6 728.7,208.3 732.1,196.0 735.5,194.7 738.9,182.8 742.3,181.5 745.7,169.4 750.0,168.8 750.0,168.8 750.0,359.4 753.1,358.6 756.6,345.1 760.1,343.7 763.6,330.2 767.0,328.8 770.5,315.3 774.0,314.0 777.5,300.4 780.9,299.1 784.4,285.5 787.9,284.2 791.4,270.6 794.9,269.3 798.3,255.8 801.8,254.4 805.3,241.3 808.8,240.0 812.2,227.0 815.7,225.6 819.2,212.1 822.7,210.7 826.1,197.3 829.6,196.0 833.1,183.0 836.6,181.7 840.1,168.4 844.4,167.9 844.4,167.9 844.4,359.4 847.6,358.6 851.2,345.1 854.8,343.8 858.4,330.3 862.0,328.9 865.6,315.4 869.2,314.1 872.8,300.6 876.4,299.2 880.0,285.7 883.6,284.4 887.2,270.9 890.8,269.5 894.4,256.0 898.0,254.7 901.6,241.6 905.2,240.3 908.8,227.3 912.4,226.0 916.0,212.5 919.6,211.1 923.2,197.7 926.8,196.4 930.3,183.4 933.9,182.1 937.5,168.9 941.9,168.4 941.9,168.4 941.9,359.4 945.2,358.6 948.8,345.1 952.4,343.8 956.0,330.3 959.6,328.9 963.2,315.4 966.8,314.1 970.5,300.6 974.1,299.3 977.7,285.8 981.3,284.4 984.9,270.9 988.5,269.6 992.2,256.1 995.8,254.7 999.4,241.7 1003.0,240.4 1006.6,227.4 1010.2,226.1 1013.8,212.6 1017.5,211.2 1021.1,197.8 1024.7,196.5 1028.3,183.5 1031.9,182.2 1035.5,169.0 1039.9,168.5 1039.9,168.5 1039.9,359.4 1043.1,358.6 1046.6,345.2 1050.1,343.8 1053.6,330.4 1057.1,329.1 1060.6,315.7 1064.1,314.3 1067.6,300.9 1071.1,299.6 1074.6,286.2 1078.1,284.8 1081.6,271.4 1085.1,270.0 1088.6,256.6 1092.1,255.3 1095.6,242.3 1099.1,241.0 1102.6,228.1 1106.1,226.8 1109.6,213.4 1113.1,212.0 1116.6,198.6 1120.1,197.3 1123.6,184.4 1127.1,183.1 1130.6,170.1 1134.9,169.5 1134.9,169.5 1134.9,359.4 1138.1,358.6 1141.7,345.3 1145.2,343.9 1148.8,330.6 1152.4,329.3 1155.9,315.9 1159.5,314.6 1163.0,301.3 1166.6,299.9 1170.2,286.6 1173.7,285.2 1177.3,271.9 1180.8,270.6 1184.4,257.2 1188.0,255.9 1191.5,242.9 1195.1,241.6 1198.7,228.8 1202.2,227.5 1205.8,214.2 1209.3,212.9 1212.9,199.6 1216.5,198.3 1220.0,185.4 1223.6,184.1 1227.1,171.2 1231.5,170.7 1231.5,170.7 1231.5,359.4 1234.7,358.6 1238.2,345.1 1241.7,343.8 1245.2,330.3 1248.7,328.9 1252.2,315.4 1255.7,314.1 1259.2,300.6 1262.7,299.2 1266.2,285.7 1269.7,284.4 1273.2,270.9 1276.7,269.5 1280.2,256.0 1283.7,254.7 1287.2,241.6 1290.7,240.3 1294.2,227.3 1297.7,226.0 1301.2,212.5 1304.7,211.1 1308.2,197.7 1311.7,196.4 1315.2,183.4 1318.7,182.1 1322.2,168.9 1326.5,168.4 1326.5,168.4 1326.5,359.4 1329.7,358.6 1333.3,345.2 1336.8,343.9 1340.4,330.5 1343.9,329.2 1347.5,315.8 1351.0,314.5 1354.6,301.1 1358.2,299.7 1361.7,286.4 1365.3,285.0 1368.8,271.7 1372.4,270.3 1376.0,256.9 1379.5,255.6 1383.1,242.6 1386.6,241.3 1390.2,228.4 1393.7,227.1 1397.3,213.8 1400.9,212.4 1404.4,199.1 1408.0,197.8 1411.5,184.9 1415.1,183.6 1418.6,170.6 1423.0,170.1" stroke="#008000" stroke-width="1" shape-rendering="crispEdges"/>
<polyline points="349.0,296.5 350.0,296.5 351.0,296.5 352.0,296.5 353.0,296.5 354.0,296.5 355.0,296.5 356.0,296.5 357.0,296.5 358.0,296.5 359.0,296.5 360.0,296.5 361.0,296.5 361.0,295.5 362.0,295.5 363.0,295.5 364.0,295.5 365.0,295.5 366.0,295.5 367.0,295.5 368.0,295.5 369.0,295.5 370.0,295.5 371.0,295.5 372.0,295.5 373.0,295.5 374.0,295.5 375.0,295.5 376.0,295.5 377.0,295.5 378.0,295.5 379.0,295.5 380.0,295.5 381.0,295.5 382.0,295.5 383.0,295.5 384.0,295.5 385.0,295.5 386.0,295.5 387.0,295.5 387.0,294.5 388.0,294.5 389.0,294.5 390.0,294.5 391.0,294.5 392.0,294.5 393.0,294.5 394.0,294.5 395.0,294.5 396.0,294.5 397.0,294.5 398.0,294.5 399.0,294.5 400.0,294.5 401.0,294.5 402.0,294.5 403.0,294.5 404.0,294.5 405.0,294.5 406.0,294.5 407.0,294.5 408.0,294.5 409.0,294.5 410.0,294.5 411.0,294.5 412.0,294.5 413.0,294.5 413.0,293.5 414.0,293.5 415.0,293.5 416.0,293.5 417.0,293.5 418.0,293.5 419.0,293.5 420.0,293.5 421.0,293.5 422.0,293.5 423.0,293.5 424.0,293.5 425.0,293.5 426.0,293.5 427.0,293.5 428.0,293.5 429.0,293.5 430.0,293.5 431.0,293.5 432.0,293.5 433.0,293.5 434.0,293.5 435.0,293.5 436.0,293.5 437.0,293.5 438.0,293.5 439.0,293.5 439.0,292.5 440.0,292.5 441.0,292.5 442.0,292.5 443.0,292.5 444.0,292.5 445.0,292.5 446.0,292.5 447.0,292.5 448.0,292.5 449.0,292.5 450.0,292.5 451.0,292.5 452.0,292.5 453.0,292.5 454.0,292.5 455.0,292.5 456.0,292.5 457.0,292.5 458.0,292.5 459.0,292.5 460.0,292.5 461.0,292.5 462.0,292.5 463.0,292.5 464.0,292.5 465.0,292.5 465.0,291.5 466.0,291.5 467.0,291.5 468.0,291.5 469.0,291.5 470.0,291.5 471.0,291.5 472.0,291.5 473.0,291.5 474.0,291.5 475.0,291.5 476.0,291.5 477.0,291.5 478.0,291.5 479.0,291.5 480.0,291.5 481.0,291.5 482.0,291.5 483.0,291.5 484.0,291.5 485.0,291.5 486.0,291.5 487.0,291.5 488.0,291.5 489.0,291.5 490.0,291.5 491.0,291.5 491.0,290.5 492.0,290.5 493.0,290.5 494.0,290.5 495.0,290.5 496.0,290.5 497.0,290.5 498.0,290.5 499.0,290.5 500.0,290.5 501.0,290.5 502.0,290.5 503.0,290.5 504.0,290.5 505.0,290.5 506.0,290.5 507.0,290.5 508.0,290.5 509.0,290.5 510.0,290.5 511.0,290.5 512.0,290.5 513.0,290.5 514.0,290.5 515.0,290.5 516.0,290.5 517.0,290.5 517.0,289.5 518.0,289.5 519.0,289.5 520.0,289.5 521.0,289.5 522.0,289.5 523.0,289.5 524.0,289.5 525.0,289.5 526.0,289.5 527.0,289.5 528.0,289.5 529.0,289.5 530.0,289.5 531.0,289.5 532.0,289.5 533.0,289.5 534.0,289.5 535.0,289.5 536.0,289.5 537.0,289.5 538.0,289.5 539.0,289.5 540.0,289.5 541.0,289.5 542.0,289.5 543.0,289.5 543.0,288.5 544.0,288.5 545.0,288.5 546.0,288.5 547.0,288.5 548.0,288.5 549.0,288.5 550.0,288.5 551.0,288.5 552.0,288.5 553.0,288.5 554.0,288.5 555.0,288.5 556.0,288.5 557.0,288.5 558.0,288.5 559.0,288.5 560.0,288.5 561.0,288.5 562.0,288.5 563.0,288.5 564.0,288.5 565.0,288.5 566.0,288.5 567.0,288.5 568.0,288.5 569.0,288.5 569.0,287.5 570.0,287.5 571.0,287.5 572.0,287.5 573.0,287.5 574.0,287.5 575.0,287.5 576.0,287.5 577.0,287.5 578.0,287.5 579.0,287.5 580.0,287.5 581.0,287.5 582.0,287.5 583.0,287.5 584.0,287.5 585.0,287.5 586.0,287.5 587.0,287.5 588.0,287.5 589.0,287.5 590.0,287.5 591.0,287.5 592.0,287.5 593.0,287.5 594.0,287.5 595.0,287.5 595.0,286.5 596.0,286.5 597.0,286.5 598.0,286.5 599.0,286.5 600.0,286.5 601.0,286.5 602.0,286.5 603.0,286.5 604.0,286.5 605.0,286.5 606.0,286.5 607.0,286.5 608.0,286.5 609.0,286.5 610.0,286.5 611.0,286.5 612.0,286.5 613.0,286.5 614.0,286.5 615.0,286.5 616.0,286.5 617.0,286.5 618.0,286.5 619.0,286.5 620.0,286.5 621.0,286.5 621.0,285.5 622.0,285.5 623.0,285.5 624.0,285.5 625.0,285.5 626.0,285.5 627.0,285.5 628.0,285.5 629.0,285.5 630.0,285.5 631.0,285.5 632.0,285.5 633.0,285.5 634.0,285.5 635.0,285.5 636.0,285.5 637.0,285.5 638.0,285.5 639.0,285.5 640.0,285.5 641.0,285.5 642.0,285.5 643.0,285.5 644.0,285.5 645.0,285.5 646.0,285.5 647.0,285.5 647.0,284.5 648.0,284.5 649.0,284.5 650.0,284.5 651.0,284.5 652.0,284.5 653.0,284.5 654.0,284.5 655.0,284.5 656.0,284.5 657.0,284.5 658.0,284.5 659.0,284.5 660.0,284.5 661.0,284.5 662.0,284.5 663.0,284.5 664.0,284.5 665.0,284.5 666.0,284.5 667.0,284.5 668.0,284.5 669.0,284.5 670.0,284.5 671.0,284.5 672.0,284.5 673.0,284.5 673.0,283.5 674.0,283.5 675.0,283.5 676.0,283.5 677.0,283.5 678.0,283.5 679.0,283.5 680.0,283.5 681.0,283.5 682.0,283.5 683.0,283.5 684.0,283.5 685.0,283.5 686.0,283.5 687.0,283.5 688.0,283.5 689.0,283.5 690.0,283.5 691.0,283.5 692.0,283.5 693.0,283.5 694.0,283.5 695.0,283.5 696.0,283.5 697.0,283.5 698.0,283.5 699.0,283.5 699.0,282.5 700.0,282.5 701.0,282.5 702.0,282.5 703.0,282.5 704.0,282.5 705.0,282.5 706.0,282.5 707.0,282.5 708.0,282.5 709.0,282.5 710.0,282.5 711.0,282.5 712.0,282.5 713.0,282.5 714.0,282.5 715.0,282.5 716.0,282.5 717.0,282.5 718.0,282.5 719.0,282.5 720.0,282.5 721.0,282.5 722.0,282.5 723.0,282.5 724.0,282.5 725.0,282.5 725.0,281.5 726.0,281.5 727.0,281.5 728.0,281.5 729.0,281.5 730.0,281.5 731.0,281.5 732.0,281.5 733.0,281.5 734.0,281.5 735.0,281.5 736.0,281.5 737.0,281.5 738.0,281.5 739.0,281.5 740.0,281.5 741.0,281.5 742.0,281.5 743.0,281.5 744.0,281.5 745.0,281.5 746.0,281.5 747.0,281.5 748.0,281.5 749.0,281.5 750.0,281.5 751.0,281.5 751.0,280.5 752.0,280.5 753.0,280.5 754.0,280.5 755.0,280.5 756.0,280.5 757.0,280.5 758.0,280.5 759.0,280.5 760.0,280.5 761.0,280.5 762.0,280.5 763.0,280.5 764.0,280.5 765.0,280.5 766.0,280.5 767.0,280.5 768.0,280.5 769.0,280.5 770.0,280.5 771.0,280.5 772.0,280.5 773.0,280.5 774.0,280.5 775.0,280.5 776.0,280.5 777.0,280.5 777.0,279.5 778.0,279.5 779.0,279.5 780.0,279.5 781.0,279.5 782.0,279.5 783.0,279.5 784.0,279.5 785.0,279.5 786.0,279.5 787.0,279.5 788.0,279.5 789.0,279.5 790.0,279.5 791.0,279.5 792.0,279.5 793.0,279.5 794.0,279.5 795.0,279.5 796.0,279.5 797.0,279.5 798.0,279.5 799.0,279.5 800.0,279.5 801.0,279.5 802.0,279.5 803.0,279.5 803.0,278.5 804.0,278.5 805.0,278.5 806.0,278.5 807.0,278.5 808.0,278.5 809.0,278.5 810.0,278.5 811.0,278.5 812.0,278.5 813.0,278.5 814.0,278.5 815.0,278.5 816.0,278.5 817.0,278.5 818.0,278.5 819.0,278.5 820.0,278.5 821.0,278.5 822.0,278.5 823.0,278.5 824.0,278.5 825.0,278.5 826.0,278.5 827.0,278.5 828.0,278.5 829.0,278.5 829.0,277.5 830.0,277.5 831.0,277.5 832.0,277.5 833.0,277.5 834.0,277.5 835.0,277.5 836.0,277.5 837.0,277.5 838.0,277.5 839.0,277.5 840.0,277.5 841.0,277.5 842.0,277.5 843.0,277.5 844.0,277.5 845.0,277.5 846.0,277.5 847.0,277.5 848.0,277.5 849.0,277.5 850.0,277.5 851.0,277.5 852.0,277.5 853.0,277.5 854.0,277.5 855.0,277.5 855.0,276.5 856.0,276.5 857.0,276.5 858.0,276.5 859.0,276.5 860.0,276.5 861.0,276.5 862.0,276.5 863.0,276.5 864.0,276.5 865.0,276.5 866.0,276.5 867.0,276.5 868.0,276.5 869.0,276.5 870.0,276.5 871.0,276.5 872.0,276.5 873.0,276.5 874.0,276.5 875.0,276.5 876.0,276.5 877.0,276.5 878.0,276.5 879.0,276.5 880.0,276.5 881.0,276.5 881.0,275.5 882.0,275.5 883.0,275.5 884.0,275.5 885.0,275.5 886.0,275.5 887.0,275.5 888.0,275.5 889.0,275.5 890.0,275.5 891.0,275.5 892.0,275.5 893.0,275.5 894.0,275.5 895.0,275.5 896.0,275.5 897.0,275.5 898.0,275.5 899.0,275.5 900.0,275.5 901.0,275.5 902.0,275.5 903.0,275.5 904.0,275.5 905.0,275.5 906.0,275.5 907.0,275.5 907.0,274.5 908.0,274.5 909.0,274.5 910.0,274.5 911.0,274.5 912.0,274.5 913.0,274.5 914.0,274.5 915.0,274.5 916.0,274.5 917.0,274.5 918.0,274.5 919.0,274.5 920.0,274.5 921.0,274.5 922.0,274.5 923.0,274.5 924.0,274.5 925.0,274.5 926.0,274.5 927.0,274.5 928.0,274.5 929.0,274.5 930.0,274.5 931.0,274.5 932.0,274.5 933.0,274.5 933.0,273.5 934.0,273.5 935.0,273.5 936.0,273.5 937.0,273.5 938.0,273.5 939.0,273.5 940.0,273.5 941.0,273.5 942.0,273.5 943.0,273.5 944.0,273.5 945.0,273.5 946.0,273.5 947.0,273.5 948.0,273.5 949.0,273.5 950.0,273.5 951.0,273.5 952.0,273.5 953.0,273.5 954.0,273.5 955.0,273.5 956.0,273.5 957.0,273.5 958.0,273.5 959.0,273.5 959.0,272.5 960.0,272.5 961.0,272.5 962.0,272.5 963.0,272.5 964.0,272.5 965.0,272.5 966.0,272.5 967.0,272.5 968.0,272.5 969.0,272.5 970.0,272.5 971.0,272.5 972.0,272.5 973.0,272.5 974.0,272.5 975.0,272.5 976.0,272.5 977.0,272.5 978.0,272.5 979.0,272.5 980.0,272.5 981.0,272.5 982.0,272.5 983.0,272.5 984.0,272.5 985.0,272.5 985.0,271.5 986.0,271.5 987.0,271.5 988.0,271.5 989.0,271.5 990.0,271.5 991.0,271.5 992.0,271.5 993.0,271.5 994.0,271.5 995.0,271.5 996.0,271.5 997.0,271.5 998.0,271.5 999.0,271.5 1000.0,271.5 1001.0,271.5 1002.0,271.5 1003.0,271.5 1004.0,271.5 1005.0,271.5 1006.0,271.5 1007.0,271.5 1008.0,271.5 1009.0,271.5 1010.0,271.5 1011.0,271.5 1011.0,270.5 1012.0,270.5 1013.0,270.5 1014.0,270.5 1015.0,270.5 1016.0,270.5 1017.0,270.5 1018.0,270.5 1019.0,270.5 1020.0,270.5 1021.0,270.5 1022.0,270.5 1023.0,270.5 1024.0,270.5 1025.0,270.5 1026.0,270.5 1027.0,270.5 1028.0,270.5 1029.0,270.5 1030.0,270.5 1031.0,270.5 1032.0,270.5 1033.0,270.5 1034.0,270.5 1035.0,270.5 1036.0,270.5 1037.0,270.5 1037.0,269.5 1038.0,269.5 1039.0,269.5 1040.0,269.5 1041.0,269.5 1042.0,269.5 1043.0,269.5 1044.0,269.5 1045.0,269.5 1046.0,269.5 1047.0,269.5 1048.0,269.5 1049.0,269.5 1050.0,269.5 1051.0,269.5 1052.0,269.5 1053.0,269.5 1054.0,269.5 1055.0,269.5 1056.0,269.5 1057.0,269.5 1058.0,269.5 1059.0,269.5 1060.0,269.5 1061.0,269.5 1062.0,269.5 1063.0,269.5 1063.0,268.5 1064.0,268.5 1065.0,268.5 1066.0,268.5 1067.0,268.5 1068.0,268.5 1069.0,268.5 1070.0,268.5 1071.0,268.5 1072.0,268.5 1073.0,268.5 1074.0,268.5 1075.0,268.5 1076.0,268.5 1077.0,268.5 1078.0,268.5 1079.0,268.5 1080.0,268.5 1081.0,268.5 1082.0,268.5 1083.0,268.5 1084.0,268.5 1085.0,268.5 1086.0,268.5 1087.0,268.5 1088.0,268.5 1089.0,268.5 1089.0,267.5 1090.0,267.5 1091.0,267.5 1092.0,267.5 1093.0,267.5 1094.0,267.5 1095.0,267.5 1096.0,267.5 1097.0,267.5 1098.0,267.5 1099.0,267.5 1100.0,267.5 1101.0,267.5 1102.0,267.5 1103.0,267.5 1104.0,267.5 1105.0,267.5 1106.0,267.5 1107.0,267.5 1108.0,267.5 1109.0,267.5 1110.0,267.5 1111.0,267.5 1112.0,267.5 1113.0,267.5 1114.0,267.5 1115.0,267.5 1115.0,266.5 1116.0,266.5 1117.0,266.5 1118.0,266.5 1119.0,266.5 1120.0,266.5 1121.0,266.5 1122.0,266.5 1123.0,266.5 1124.0,266.5 1125.0,266.5 1126.0,266.5 1127.0,266.5 1128.0,266.5 1129.0,266.5 1130.0,266.5 1131.0,266.5 1132.0,266.5 1133.0,266.5 1134.0,266.5 1135.0,266.5 1136.0,266.5 1137.0,266.5 1138.0,266.5 1139.0,266.5 1140.0,266.5 1141.0,266.5 1141.0,265.5 1142.0,265.5 1143.0,265.5 1144.0,265.5 1145.0,265.5 1146.0,265.5 1147.0,265.5 1148.0,265.5 1149.0,265.5 1150.0,265.5 1151.0,265.5 1152.0,265.5 1153.0,265.5 1154.0,265.5 1155.0,265.5 1156.0,265.5 1157.0,265.5 1158.0,265.5 1159.0,265.5 1160.0,265.5 1161.0,265.5 1162.0,265.5 1163.0,265.5 1164.0,265.5 1165.0,265.5 1166.0,265.5 1167.0,265.5 1167.0,264.5 1168.0,264.5 1169.0,264.5 1170.0,264.5 1171.0,264.5 1172.0,264.5 1173.0,264.5 1174.0,264.5 1175.0,264.5 1176.0,264.5 1177.0,264.5 1178.0,264.5 1179.0,264.5 1180.0,264.5 1181.0,264.5 1182.0,264.5 1183.0,264.5 1184.0,264.5 1185.0,264.5 1186.0,264.5 1187.0,264.5 1188.0,264.5 1189.0,264.5 1190.0,264.5 1191.0,264.5 1192.0,264.5 1193.0,264.5 1193.0,263.5 1194.0,263.5 1195.0,263.5 1196.0,263.5 1197.0,263.5 1198.0,263.5 1199.0,263.5 1200.0,263.5 1201.0,263.5 1202.0,263.5 1203.0,263.5 1204.0,263.5 1205.0,263.5 1206.0,263.5 1207.0,263.5 1208.0,263.5 1209.0,263.5 1210.0,263.5 1211.0,263.5 1212.0,263.5 1213.0,263.5 1214.0,263.5 1215.0,263.5 1216.0,263.5 1217.0,263.5 1218.0,263.5 1219.0,263.5 1219.0,262.5 1220.0,262.5 1221.0,262.5 1222.0,262.5 1223.0,262.5 1224.0,262.5 1225.0,262.5 1226.0,262.5 1227.0,262.5 1228.0,262.5 1229.0,262.5 1230.0,262.5 1231.0,262.5 1232.0,262.5 1233.0,262.5 1234.0,262.5 1235.0,262.5 1236.0,262.5 1237.0,262.5 1238.0,262.5 1239.0,262.5 1240.0,262.5 1241.0,262.5 1242.0,262.5 1243.0,262.5 1244.0,262.5 1245.0,262.5 1245.0,261.5 1246.0,261.5 1247.0,261.5 1248.0,261.5 1249.0,261.5 1250.0,261.5 1251.0,261.5 1252.0,261.5 1253.0,261.5 1254.0,261.5 1255.0,261.5 1256.0,261.5 1257.0,261.5 1258.0,261.5 1259.0,261.5 1260.0,261.5 1261.0,261.5 1262.0,261.5 1263.0,261.5 1264.0,261.5 1265.0,261.5 1266.0,261.5 1267.0,261.5 1268.0,261.5 1269.0,261.5 1270.0,261.5 1271.0,261.5 1271.0,260.5 1272.0,260.5 1273.0,260.5 1274.0,260.5 1275.0,260.5 1276.0,260.5 1277.0,260.5 1278.0,260.5 1279.0,260.5 1280.0,260.5 1281.0,260.5 1282.0,260.5 1283.0,260.5 1284.0,260.5 1285.0,260.5 1286.0,260.5 1287.0,260.5 1288.0,260.5 1289.0,260.5 1290.0,260.5 1291.0,260.5 1292.0,260.5 1293.0,260.5 1294.0,260.5 1295.0,260.5 1296.0,260.5 1297.0,260.5 1297.0,259.5 1298.0,259.5 1299.0,259.5 1300.0,259.5 1301.0,259.5 1302.0,259.5 1303.0,259.5 1304.0,259.5 1305.0,259.5 1306.0,259.5 1307.0,259.5 1308.0,259.5 1309.0,259.5 1310.0,259.5 1311.0,259.5 1312.0,259.5 1313.0,259.5 1314.0,259.5 1315.0,259.5 1316.0,259.5 1317.0,259.5 1318.0,259.5 1319.0,259.5 1320.0,259.5 1321.0,259.5 1322.0,259.5 1323.0,259.5 1323.0,258.5 1324.0,258.5 1325.0,258.5 1326.0,258.5 1327.0,258.5 1328.0,258.5" stroke="#0000ff" stroke-width="1.4" shape-rendering="crispEdges"/>
</g>
<rect x="348" y="118" width="1.2" height="251" fill="#000"/>
<rect x="348" y="368" width="980" height="1.2" fill="#000"/>
<g font-family="Liberation Sans" font-size="12" fill="#ff0000"><rect x="344" y="360" width="4" height="1" fill="#000"/><text x="341" y="365" text-anchor="end">0</text><rect x="344" y="333" width="4" height="1" fill="#000"/><text x="341" y="338" text-anchor="end">50</text><rect x="344" y="306" width="4" height="1" fill="#000"/><text x="341" y="311" text-anchor="end">100</text><rect x="344" y="279" width="4" height="1" fill="#000"/><text x="341" y="284" text-anchor="end">150</text><rect x="344" y="252" width="4" height="1" fill="#000"/><text x="341" y="257" text-anchor="end">200</text><rect x="344" y="226" width="4" height="1" fill="#000"/><text x="341" y="231" text-anchor="end">250</text><rect x="344" y="199" width="4" height="1" fill="#000"/><text x="341" y="204" text-anchor="end">300</text><rect x="344" y="173" width="4" height="1" fill="#000"/><text x="341" y="178" text-anchor="end">350</text><rect x="344" y="146" width="4" height="1" fill="#000"/><text x="341" y="151" text-anchor="end">400</text></g>
<g font-family="Liberation Sans" font-size="12" fill="#0000ff"><rect x="373.0" y="369" width="1" height="4" fill="#000"/><text x="373.5" y="385" text-anchor="middle">19:27:30.0</text><rect x="474.0" y="369" width="1" height="4" fill="#000"/><text x="474.5" y="385" text-anchor="middle">19:27:32.0</text><rect x="575.0" y="369" width="1" height="4" fill="#000"/><text x="575.5" y="385" text-anchor="middle">19:27:34.0</text><rect x="676.0" y="369" width="1" height="4" fill="#000"/><text x="676.5" y="385" text-anchor="middle">19:27:36.0</text><rect x="777.0" y="369" width="1" height="4" fill="#000"/><text x="777.5" y="385" text-anchor="middle">19:27:38.0</text><rect x="879.0" y="369" width="1" height="4" fill="#000"/><text x="879.5" y="385" text-anchor="middle">19:27:40.0</text><rect x="980.0" y="369" width="1" height="4" fill="#000"/><text x="980.5" y="385" text-anchor="middle">19:27:42.0</text><rect x="1081.0" y="369" width="1" height="4" fill="#000"/><text x="1081.5" y="385" text-anchor="middle">19:27:44.0</text><rect x="1182.0" y="369" width="1" height="4" fill="#000"/><text x="1182.5" y="385" text-anchor="middle">19:27:46.0</text><rect x="1283.0" y="369" width="1" height="4" fill="#000"/><text x="1283.5" y="385" text-anchor="middle">19:27:48.0</text></g>
<text x="1298" y="357.5" font-family="Liberation Sans" font-size="12" fill="#4848ff">sec</text>
<!-- cursors -->
<g stroke="#ff2a2a">
<line x1="650.5" y1="118" x2="650.5" y2="367" stroke-width="1" stroke-dasharray="3,3"/>
<line x1="751.5" y1="118" x2="751.5" y2="367" stroke-width="1" stroke-dasharray="3,3"/>
</g>
<g fill="#ff3030"><path d="M649,129 V118.5 L650.5,117 L652,118.5 V129Z"/><path d="M649,357 V368 L650.5,369.5 L652,368 V357Z"/>
<path d="M750,129 V118.5 L751.5,117 L753,118.5 V129Z"/><path d="M750,357 V368 L751.5,369.5 L753,368 V357Z"/></g>
<!-- legend -->
<g stroke="#ff0000" stroke-width="1" shape-rendering="crispEdges">
<line x1="356" y1="132.5" x2="367" y2="132.5"/><line x1="361.5" y1="132" x2="361.5" y2="163"/>
<line x1="361" y1="147.5" x2="367" y2="147.5"/><line x1="361" y1="162.5" x2="367" y2="162.5"/>
</g>
<g font-family="Liberation Sans" font-size="11.5" letter-spacing="0.35">
<text x="371" y="136.5" fill="#ff3030">MD.Act.Pos</text>
<text x="371" y="151.5" fill="#2a8a2a">Turn2.Pact</text>
<text x="371" y="166.5" fill="#3030ff">Feed2.Pact</text>
</g>
<g fill="none" stroke="#ee0000" stroke-width="3" stroke-linecap="round">
<path d="M346.5,138 C352,139.5 360,139.5 370,139.3 L420,139.3 C430,139.5 445,140 456,140.8"/>
<path d="M350,154.5 C380,155 410,154.5 420,154 C430,152 440,152.5 446,153"/>
<path d="M348,167.5 C360,168.5 382,169.5 392,171.5 C398,173.8 410,174.5 422,174.5 L447,174.5 L447,169"/>
</g>
</svg>
<div class="a" style="left:286px;top:391px;width:1054px;height:1px;background:#fff"></div>
<!-- table -->
<div class="a" style="left:0;top:396px;width:1343px;height:1px;background:#7A7868"></div>
<div class="a" style="left:0;top:397px;width:1343px;height:1px;background:#222"></div>
<div class="a" style="left:0;top:398px;width:1343px;height:97px;background:#ECE9D8"></div>
<div class="a" style="left:-5px;top:403px;width:10px;height:10px;background:#ECE9D8;border:1px solid;border-color:#fff #808080 #808080 #fff"></div>
<svg class="ico" style="left:0px;top:405px" width="4" height="6" viewBox="0 0 4 6"><path d="M-3,0 L3,6 M3,0 L-3,6" stroke="#000" stroke-width="1.6"/></svg>
<div class="a" style="left:-5px;top:414px;width:10px;height:10px;background:#ECE9D8;border:1px solid;border-color:#fff #808080 #808080 #fff"></div>
<div class="a" style="left:2px;top:425px;width:3px;height:70px;border-left:1px solid #808080;border-right:1px solid #fff"></div>
<div class="a" style="left:47px;top:420px;width:1290px;height:75px;background:#fff"></div>
<div class="a" style="left:1337px;top:398px;width:3px;height:97px;background:#ECE9D8"></div>
<div class="a" style="left:8px;top:398px;width:1327px;height:23px;background:#EBE8D8;border-bottom:1px solid #ACA899;box-shadow:inset 0 -2px 0 #D6D2BE"></div>
<div class="hd" style="left:47px;width:286px">SignalName</div>
<div class="hd" style="left:333px;width:143px">X1</div>
<div class="a" style="left:332px;top:404px;width:2px;height:12px;border-left:1px solid #C6C2B0;border-right:1px solid #fff"></div>
<div class="hd" style="left:476px;width:143px">X2</div>
<div class="a" style="left:475px;top:404px;width:2px;height:12px;border-left:1px solid #C6C2B0;border-right:1px solid #fff"></div>
<div class="hd" style="left:619px;width:143px">X2 - X1</div>
<div class="a" style="left:618px;top:404px;width:2px;height:12px;border-left:1px solid #C6C2B0;border-right:1px solid #fff"></div>
<div class="hd" style="left:762px;width:143px">Y1</div>
<div class="a" style="left:761px;top:404px;width:2px;height:12px;border-left:1px solid #C6C2B0;border-right:1px solid #fff"></div>
<div class="hd" style="left:905px;width:143px">Y2</div>
<div class="a" style="left:904px;top:404px;width:2px;height:12px;border-left:1px solid #C6C2B0;border-right:1px solid #fff"></div>
<div class="hd" style="left:1048px;width:143px">Y2 - Y1</div>
<div class="a" style="left:1047px;top:404px;width:2px;height:12px;border-left:1px solid #C6C2B0;border-right:1px solid #fff"></div>
<div class="hd" style="left:1191px;width:143px">Unit</div>
<div class="a" style="left:1190px;top:404px;width:2px;height:12px;border-left:1px solid #C6C2B0;border-right:1px solid #fff"></div>
<div class="a" style="left:1332px;top:404px;width:2px;height:12px;border-left:1px solid #C6C2B0;border-right:1px solid #fff"></div>
<div class="a" style="left:47px;top:398px;width:1px;height:22px;background:#C6C2B0"></div>
<div class="a" style="left:8px;top:421px;width:39px;height:74px;background:#ECE9D8"></div>
<div class="a" style="left:12px;top:423px;font-size:12px;line-height:14px">1</div>
<div class="a" style="left:10px;top:439px;width:34px;height:1px;background:#C6C2B0"></div>
<div class="a" style="left:10px;top:440px;width:34px;height:1px;background:#fff"></div>
<div class="a" style="left:12px;top:443px;font-size:12px;line-height:14px">2</div>
<div class="a" style="left:10px;top:459px;width:34px;height:1px;background:#C6C2B0"></div>
<div class="a" style="left:10px;top:460px;width:34px;height:1px;background:#fff"></div>
<div class="a" style="left:12px;top:463px;font-size:12px;line-height:14px">3</div>
<div class="a" style="left:10px;top:479px;width:34px;height:1px;background:#C6C2B0"></div>
<div class="a" style="left:10px;top:480px;width:34px;height:1px;background:#fff"></div>
<div class="a" style="left:47px;top:440px;width:1288px;height:1px;background:#ACA899"></div>
<div class="a" style="left:47px;top:460px;width:1288px;height:1px;background:#ACA899"></div>
<div class="a" style="left:47px;top:480px;width:1288px;height:1px;background:#ACA899"></div>
<div class="a" style="left:47px;top:420px;width:1px;height:61px;background:#ACA899"></div>
<div class="a" style="left:333px;top:420px;width:1px;height:61px;background:#ACA899"></div>
<div class="a" style="left:476px;top:420px;width:1px;height:61px;background:#ACA899"></div>
<div class="a" style="left:619px;top:420px;width:1px;height:61px;background:#ACA899"></div>
<div class="a" style="left:762px;top:420px;width:1px;height:61px;background:#ACA899"></div>
<div class="a" style="left:905px;top:420px;width:1px;height:61px;background:#ACA899"></div>
<div class="a" style="left:1048px;top:420px;width:1px;height:61px;background:#ACA899"></div>
<div class="a" style="left:1191px;top:420px;width:1px;height:61px;background:#ACA899"></div>
<div class="a" style="left:1334px;top:420px;width:1px;height:61px;background:#ACA899"></div>
<div class="cell" style="left:52px;top:424px;color:#FF0000;text-align:left">MD.Act.Pos</div>
<div class="cell" style="left:333px;width:143px;top:424px;color:#FF0000">19:27:35.498</div>
<div class="cell" style="left:476px;width:143px;top:424px;color:#FF0000">19:27:37.494</div>
<div class="cell" style="left:619px;width:143px;top:424px;color:#FF0000">1.996</div>
<div class="cell" style="left:762px;width:143px;top:424px;color:#FF0000">78.46</div>
<div class="cell" style="left:905px;width:143px;top:424px;color:#FF0000">303.16</div>
<div class="cell" style="left:1048px;width:143px;top:424px;color:#FF0000">224.70</div>
<div class="cell" style="left:52px;top:444px;color:#008000;text-align:left">Turn2.Pact</div>
<div class="cell" style="left:333px;width:143px;top:444px;color:#008000">19:27:35.498</div>
<div class="cell" style="left:476px;width:143px;top:444px;color:#008000">19:27:37.494</div>
<div class="cell" style="left:619px;width:143px;top:444px;color:#008000">1.996</div>
<div class="cell" style="left:762px;width:143px;top:444px;color:#008000">350.80</div>
<div class="cell" style="left:905px;width:143px;top:444px;color:#008000">12.90</div>
<div class="cell" style="left:1048px;width:143px;top:444px;color:#008000">-337.91</div>
<div class="cell" style="left:52px;top:464px;color:#0000FF;text-align:left">Feed2.Pact</div>
<div class="cell" style="left:333px;width:143px;top:464px;color:#0000FF">19:27:35.498</div>
<div class="cell" style="left:476px;width:143px;top:464px;color:#0000FF">19:27:37.494</div>
<div class="cell" style="left:619px;width:143px;top:464px;color:#0000FF">1.996</div>
<div class="cell" style="left:762px;width:143px;top:464px;color:#0000FF">140.06</div>
<div class="cell" style="left:905px;width:143px;top:464px;color:#0000FF">147.41</div>
<div class="cell" style="left:1048px;width:143px;top:464px;color:#0000FF">7.34</div>
<div class="a" style="left:1340px;top:0;width:1px;height:495px;background:#777"></div>
<div class="a" style="left:1341px;top:0;width:2px;height:495px;background:#F6F2EC"></div>
</body></html>
